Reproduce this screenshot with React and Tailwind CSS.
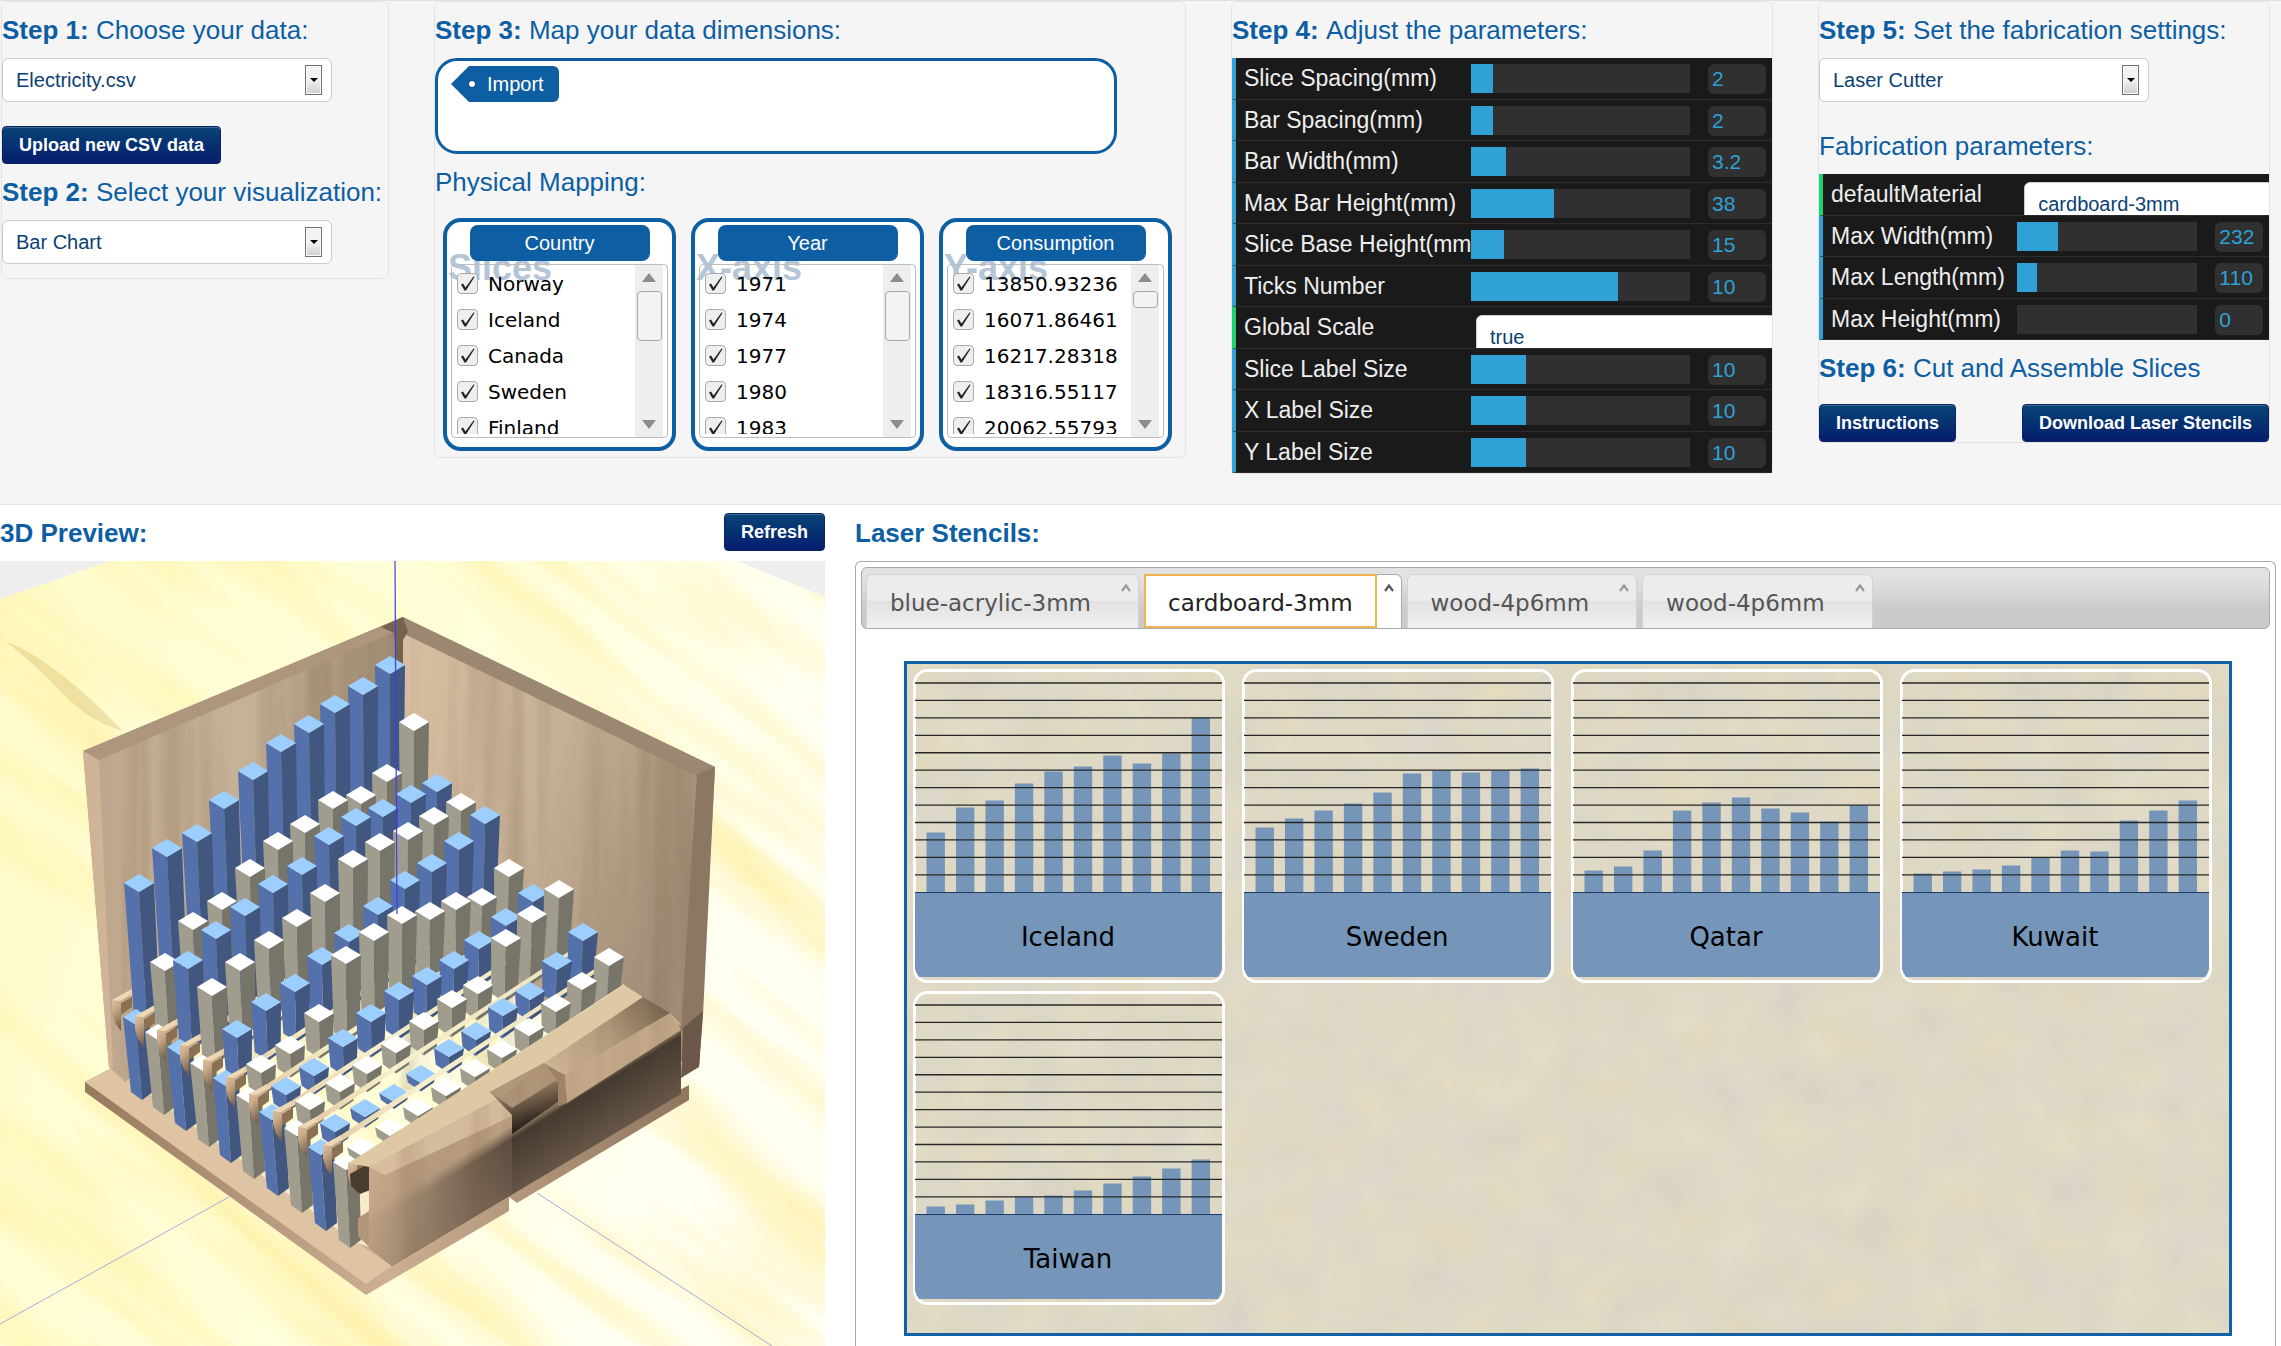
import React, { useState } from "react";

const SANS = "font-['Liberation_Sans',Arial,sans-serif]";
const WIDE = "font-['DejaVu_Sans',Verdana,sans-serif]";

/* ---------- shared controls ---------- */

function StepTitle({ step, children }) {
  return (
    <h2 className="h-14 text-[26px] leading-[56px] whitespace-nowrap text-[#0e5ea4]">
      {step && <strong className="font-bold">{step} </strong>}
      {children}
    </h2>
  );
}

function NavyButton({ children }) {
  return (
    <button
      type="button"
      className="h-[38px] rounded-[4px] border border-[#08255f] bg-linear-to-b from-[#0a4475] to-[#081b6e] px-4 text-[18px] leading-[36px] font-bold whitespace-nowrap text-white shadow-[inset_0_1px_0_#3b6a98]"
    >
      {children}
    </button>
  );
}

function SelectBox({ label, options }) {
  return (
    <div className="relative w-[330px]">
      <select
        aria-label={label}
        className="block h-11 w-full appearance-none rounded-[6px] border border-[#cccccc] bg-white px-[13px] text-[20px] text-[#0b3f73]"
      >
        {options.map((o) => (
          <option key={o}>{o}</option>
        ))}
      </select>
      <span className="pointer-events-none absolute top-[7px] right-[10px] flex h-[30px] w-[17px] items-center justify-center border border-[#707070] bg-linear-to-b from-[#f2f2f2] from-50% to-[#cfcfcf] shadow-[inset_0_0_0_1px_#fafafa]">
        <svg viewBox="0 0 8 4" className="h-1 w-2">
          <path d="M0 0h8L4 4z" fill="#000" />
        </svg>
      </span>
    </div>
  );
}

/* ---------- step 3 ---------- */

function ScrollArrow({ down }) {
  return (
    <svg viewBox="0 0 14 9" className="h-[9px] w-[14px]">
      <path d={down ? "M0 0h14L7 9z" : "M0 9h14L7 0z"} fill="#8c8c8c" />
    </svg>
  );
}

function Dimension({ name, axis, values, shortThumb }) {
  return (
    <div className="relative flex h-[233px] min-w-0 flex-1 flex-col rounded-[18px] border-4 border-[#0e5ea4] bg-white px-1 pt-[3px]">
      <span className="absolute top-[26px] left-[1px] text-[36px] leading-[40px] font-bold text-[#b5c5d8]">
        {axis}
      </span>
      <button
        type="button"
        className="relative mx-auto h-9 w-[180px] rounded-[8px] bg-[#0e5ea4] text-[20px] text-white"
      >
        {name}
      </button>
      <div className="relative mt-[3px] flex h-[174px] rounded-[4px] border border-[#bdbdbd]">
        <ul className="h-[169px] min-w-0 flex-1 overflow-hidden pl-[5px]">
          {values.map((v) => (
            <li key={v} className="h-9">
              <label className={`flex h-9 items-center gap-[10px] text-[20px] text-black ${WIDE}`}>
                <span className="relative h-[21px] w-[21px] shrink-0">
                  <input
                    type="checkbox"
                    defaultChecked
                    className="block h-[21px] w-[21px] appearance-none rounded-[4px] border border-[#aaaaaa] bg-[#eeeeee]"
                  />
                  <svg viewBox="0 0 21 21" className="pointer-events-none absolute inset-0">
                    <path d="M4 11.5L6 10.5L8.5 14.5L16.5 3.5L17.5 4L9 17.5H7.5Z" fill="#222" />
                  </svg>
                </span>
                <span className="pt-[2px]">{v}</span>
              </label>
            </li>
          ))}
        </ul>
        <div className="mr-1 flex w-7 shrink-0 flex-col items-center bg-[#eeeeee] pt-2 pb-2">
          <ScrollArrow />
          <span
            className={`mt-[9px] w-[25px] rounded-[4px] border border-[#aaaaaa] bg-[#f2f2f2] ${shortThumb ? "h-[17px]" : "h-[50px]"}`}
          />
          <span className="flex-1" />
          <ScrollArrow down />
        </div>
      </div>
    </div>
  );
}

/* ---------- parameter tables ---------- */

const ROW =
  "flex overflow-hidden border-b border-l-4 border-b-[#2c2c2c] bg-[#1a1a1a] pl-2 odd:h-[42px] even:h-[41px]";
const ROW_LABEL =
  "min-w-0 flex-[227] overflow-hidden text-[23px] leading-[40px] whitespace-nowrap text-[#eeeeee]";

function NumberRow({ label, value, percent }) {
  const [pos, setPos] = useState(percent);
  const fill = {
    background: `linear-gradient(to right, #2fa1d6 ${pos}%, #303030 ${pos}%)`,
  };
  return (
    <div className={`${ROW} border-l-[#2fa1d6]`}>
      <span className={ROW_LABEL}>{label}</span>
      <input
        type="range"
        aria-label={label}
        min="0"
        max="100"
        value={pos}
        onChange={(e) => setPos(Number(e.target.value))}
        style={fill}
        className="mt-[6px] h-[29px] min-w-0 flex-[219] appearance-none [&::-webkit-slider-thumb]:w-0 [&::-webkit-slider-thumb]:appearance-none"
      />
      <input
        type="text"
        aria-label={`${label} value`}
        defaultValue={value}
        className="mt-[6px] mr-[6px] ml-[18px] h-[30px] min-w-0 flex-[58] rounded-[6px] bg-[#303030] indent-1 text-[21px] text-[#2fa1d6]"
      />
    </div>
  );
}

function ChoiceRow({ label, options }) {
  return (
    <div className={`${ROW} border-l-[#1ed36f]`}>
      <span className={ROW_LABEL}>{label}</span>
      <div className="min-w-0 flex-[300] overflow-hidden pt-2 pl-2">
        <select
          aria-label={label}
          className="block h-11 w-[110%] appearance-none rounded-[6px] border border-[#cccccc] bg-white px-[13px] text-[20px] text-[#0b3f73]"
        >
          {options.map((o) => (
            <option key={o}>{o}</option>
          ))}
        </select>
      </div>
    </div>
  );
}

/* ---------- 3D preview ---------- */

const BLUE = { top: "#9ccfff", left: "#5471ab", right: "#42577f" };
const GREY = { top: "#ffffff", left: "#a09d8e", right: "#77746a" };

const SLICES = [
  [[390, 665], [363, 686], [335, 704], [309, 724], [281, 743], [253, 771], [224, 800], [197, 833], [167, 848], [139, 883]],
  [[414, 722], [387, 773], [361, 795], [333, 800], [305, 824], [278, 841], [250, 868], [222, 901], [193, 921], [165, 962]],
  [[437, 783], [411, 794], [383, 808], [356, 817], [329, 836], [302, 866], [273, 884], [245, 907], [216, 930], [188, 960]],
  [[461, 802], [434, 816], [408, 831], [380, 842], [353, 859], [325, 893], [297, 918], [269, 940], [240, 962], [212, 987]],
  [[485, 815], [459, 841], [432, 863], [405, 880], [378, 906], [349, 933], [322, 956], [295, 983], [266, 1002], [237, 1029]],
  [[509, 868], [482, 897], [456, 901], [430, 911], [402, 915], [374, 932], [346, 955], [319, 1013], [290, 1045], [261, 1064]],
  [[533, 893], [506, 917], [479, 940], [454, 960], [427, 976], [399, 991], [371, 1013], [343, 1038], [314, 1067], [286, 1086]],
  [[559, 889], [532, 914], [506, 938], [478, 985], [452, 999], [424, 1021], [396, 1044], [367, 1065], [340, 1083], [310, 1101]],
  [[583, 932], [557, 961], [530, 991], [503, 1007], [476, 1031], [449, 1048], [421, 1074], [394, 1093], [365, 1108], [335, 1123]],
  [[609, 957], [582, 981], [556, 1003], [529, 1027], [502, 1049], [475, 1068], [446, 1087], [418, 1107], [390, 1127], [362, 1147]],
];

const STUBS = [
  [136, 1017, 142, 1100], [158, 1032, 164, 1115], [180, 1047, 186, 1131], [203, 1063, 209, 1147], [226, 1078, 231, 1163],
  [249, 1095, 254, 1179], [272, 1112, 278, 1196], [297, 1128, 302, 1213], [321, 1147, 326, 1231], [346, 1162, 350, 1248],
];

const HOOKS = [
  [112, 1000], [135, 1016], [157, 1030], [180, 1045], [203, 1060], [226, 1077],
  [249, 1094], [273, 1111], [298, 1127], [323, 1145], [348, 1163],
];

function Prism({ x, y, bx, by, tone, hw = 15, hh = 9 }) {
  const bw = hw - 2;
  return (
    <g>
      <path d={`M${x - hw} ${y}L${x} ${y + hh}L${bx} ${by}L${bx - bw} ${by - hh}Z`} fill={tone.left} />
      <path d={`M${x + hw} ${y}L${x} ${y + hh}L${bx} ${by}L${bx + bw} ${by - hh}Z`} fill={tone.right} />
      <path d={`M${x} ${y - hh}L${x + hw} ${y}L${x} ${y + hh}L${x - hw} ${y}Z`} fill={tone.top} />
    </g>
  );
}

function Rail({ x, y }) {
  return (
    <g>
      <path d={`M${x + 12} ${y - 6}L${x + 276} ${y - 179}L${x + 277} ${y - 175}L${x + 16} ${y - 2}Z`} fill="url(#rail)" />
      <path d={`M${x + 9} ${y + 3}L${x + 20} ${y - 3}V${y + 7}L${x + 9} ${y + 15}Z`} fill="#8b7154" />
      <path
        d={`M${x} ${y}L${x + 18} ${y - 9}V${y - 2}L${x + 9} ${y + 3}V${y + 31}L${x + 3} ${y + 23}L${x} ${y + 13}Z`}
        fill="url(#hook)"
      />
      <path d={`M${x} ${y}L${x + 18} ${y - 10}V${y - 5}L${x + 8} ${y + 1}Z`} fill="#efd9b4" />
    </g>
  );
}

function Preview() {
  return (
    <svg viewBox="0 561 825 785" className="block w-full" role="img" aria-label="3D preview">
      <defs>
        <filter id="floorGrain" x="0" y="0" width="100%" height="100%" colorInterpolationFilters="sRGB">
          <feTurbulence type="fractalNoise" baseFrequency="0.0025 0.017" numOctaves="3" seed="8" />
          <feColorMatrix values="0 0 0 0 0.99  0 0 0 0 0.92  0 0 0 0 0.55  2.4 0 0 0 -1" />
        </filter>
        <filter id="woodGrain" x="0" y="0" width="100%" height="100%" colorInterpolationFilters="sRGB">
          <feTurbulence type="fractalNoise" baseFrequency="0.04 0.002" numOctaves="3" seed="5" />
          <feColorMatrix values="0 0 0 0 0.42  0 0 0 0 0.32  0 0 0 0 0.22  2 0 0 0 -0.8" />
        </filter>
        <linearGradient id="floor" x1="0" y1="0" x2="1" y2="0.3">
          <stop offset="0" stopColor="#fffbcc" />
          <stop offset="0.5" stopColor="#fffed8" />
          <stop offset="1" stopColor="#fffff4" />
        </linearGradient>
        <linearGradient id="wallL" x1="0" y1="0" x2="1" y2="0">
          <stop offset="0" stopColor="#bda58b" />
          <stop offset="0.5" stopColor="#c6b298" />
          <stop offset="1" stopColor="#9f8870" />
        </linearGradient>
        <linearGradient id="wallR" x1="0" y1="0" x2="1" y2="0.5">
          <stop offset="0" stopColor="#d8bfa3" />
          <stop offset="0.5" stopColor="#c6b096" />
          <stop offset="1" stopColor="#a38e78" />
        </linearGradient>
        <linearGradient id="rail" x1="0" y1="1" x2="1" y2="0">
          <stop offset="0" stopColor="#e5cba5" />
          <stop offset="0.3" stopColor="#f6efcb" />
          <stop offset="1" stopColor="#efe3c0" />
        </linearGradient>
        <linearGradient id="hook" x1="0" y1="0" x2="0.4" y2="1">
          <stop offset="0" stopColor="#e8cfac" />
          <stop offset="0.45" stopColor="#c9aa88" />
          <stop offset="1" stopColor="#6f5a47" />
        </linearGradient>
        <linearGradient id="plateEdge" x1="0" y1="0" x2="1" y2="0">
          <stop offset="0" stopColor="#97795d" />
          <stop offset="0.5" stopColor="#cdb093" />
          <stop offset="1" stopColor="#8f765f" />
        </linearGradient>
        <linearGradient id="front" gradientUnits="userSpaceOnUse" x1="470" y1="1080" x2="560" y2="1227">
          <stop offset="0" stopColor="#d8bd9a" />
          <stop offset="0.35" stopColor="#cdb08f" />
          <stop offset="0.42" stopColor="#443a2f" />
          <stop offset="1" stopColor="#8a7563" />
        </linearGradient>
        <linearGradient id="frontFade" gradientUnits="userSpaceOnUse" x1="369" y1="1180" x2="530" y2="1222">
          <stop offset="0" stopColor="#c7a98a" />
          <stop offset="0.3" stopColor="#b0967c" stopOpacity="0.85" />
          <stop offset="1" stopColor="#8b7460" stopOpacity="0" />
        </linearGradient>
        <linearGradient id="cap" gradientUnits="userSpaceOnUse" x1="540" y1="1080" x2="660" y2="1000">
          <stop offset="0" stopColor="#d9bf9c" />
          <stop offset="0.6" stopColor="#b0977b" />
          <stop offset="1" stopColor="#7c6752" />
        </linearGradient>
        <linearGradient id="notch" x1="0" y1="0" x2="0.3" y2="1">
          <stop offset="0" stopColor="#b89c7e" />
          <stop offset="0.45" stopColor="#9c8167" />
          <stop offset="1" stopColor="#1e1915" />
        </linearGradient>
        <clipPath id="floorClip">
          <path d="M110 561H738L825 597V1346H0V599Z" />
        </clipPath>
        <clipPath id="wallClip">
          <path d="M83 751L403 617L715 767L699 1067L369 1247L109 1067Z" />
        </clipPath>
        <clipPath id="frontClip">
          <path d="M369 1167L501 1097L544 1063L643 997L681 1020V1094L392 1266L369 1247Z" />
        </clipPath>
      </defs>

      <rect x="0" y="561" width="825" height="785" fill="#eeeeee" />
      <g clipPath="url(#floorClip)">
        <rect x="0" y="561" width="825" height="785" fill="url(#floor)" />
        <g transform="rotate(38 400 950)">
          <rect x="-250" y="250" width="1300" height="1400" filter="url(#floorGrain)" opacity="0.6" />
        </g>
        <path d="M5 641Q55 660 123 731Q90 722 62 693Q40 668 5 641Z" fill="#c9ab55" opacity="0.3" />
      </g>
      <path d="M229 1197L0 1324M537 1193L772 1346" stroke="#a9a9dd" strokeWidth="1" />

      {/* base plate */}
      <path d="M85 1082L112 1068L400 1240L689 1085V1100L517 1203L509 1197V1211L366 1295L85 1092Z" fill="url(#plateEdge)" />
      <path d="M85 1082L112 1068L359 1244L392 1266L366 1284Z" fill="#dec4a2" />
      <path d="M112 1068L130 1040L400 1200L369 1247L357 1243Z" fill="#f7ebc8" />

      {/* back walls */}
      <path d="M83 751L403 617V880L125 1082L109 1067Z" fill="url(#wallL)" />
      <path d="M403 617L715 767L699 1067L560 1020L403 900Z" fill="url(#wallR)" />
      <g clipPath="url(#wallClip)">
        <rect x="80" y="610" width="640" height="480" filter="url(#woodGrain)" opacity="0.24" />
      </g>
      <path d="M83 751L403 617L408 626L99 760Z" fill="#ad967d" />
      <path d="M83 751L99 760L113 1068L109 1067Z" fill="#cfb498" />
      <path d="M403 617L715 767L697 776L400 632Z" fill="#9c8872" />
      <path d="M715 767L697 774L681 1030L699 1067L703 1015Z" fill="#8c7762" />
      <path d="M381 627L403 617L408 632L403 640V680L397 664L394 633Z" fill="#75634f" />

      {/* slices, back to front */}
      <Rail x={HOOKS[0][0]} y={HOOKS[0][1]} />
      {SLICES.map((bars, i) => {
        const tone = i % 2 === 0 ? BLUE : GREY;
        const [hx, hy] = HOOKS[i + 1];
        const [sx, sy, ex, ey] = STUBS[i];
        return (
          <g key={i}>
            {bars.map(([x, y], j) => {
              const floorY = Math.max(hy - 0.647 * (x - hx) + 10, y + 14);
              const lean = (395 - x) * 0.00022 * (floorY - y);
              return <Prism key={j} x={x} y={y} bx={x + lean} by={floorY} tone={tone} />;
            })}
            <Prism x={sx} y={sy} bx={ex} by={ey} tone={tone} hw={13} hh={8} />
            <Rail x={hx} y={hy} />
          </g>
        );
      })}
      <path d="M350 1174L370 1163V1190L360 1194L351 1186Z" fill="#4a3b2f" />
      <path d="M358 1218L369 1211V1247L358 1236Z" fill="#b4977a" />

      {/* front panel */}
      <path d="M349 1163L624 985L643 997L501 1097L369 1167Z" fill="#dfc9a4" />
      <path d="M369 1167L501 1097L512 1110V1131L558 1102L560 1075L670 1013L681 1024V1094L392 1266L369 1247Z" fill="url(#front)" />
      <path d="M369 1167L501 1097L512 1112V1194L392 1266L369 1247Z" fill="url(#frontFade)" />
      <path d="M369 1167L501 1097L512 1116L385 1175Z" fill="#dcc3a2" opacity="0.8" />
      <path d="M544 1063L643 997L670 1013L565 1075Z" fill="url(#cap)" />
      <path d="M565 1075L670 1013L681 1030L567 1103Z" fill="#c3a98a" />
      <path d="M490 1092L544 1063L558 1082V1102L512 1134V1115Z" fill="url(#notch)" />
      <path d="M490 1092L544 1063L557 1080L512 1108Z" fill="#b0967a" />
      <path d="M544 1063L565 1075L567 1103L558 1106V1082Z" fill="#a1866b" />
      <g clipPath="url(#frontClip)">
        <rect x="360" y="990" width="330" height="280" filter="url(#woodGrain)" opacity="0.2" />
      </g>
      <path d="M683 1028L703 1011L699 1067L681 1078Z" fill="#6b5848" />

      {/* vertical axis */}
      <path d="M395 561L397 914" stroke="#3c3cf5" strokeWidth="1.2" />
    </svg>
  );
}

/* ---------- stencils ---------- */

const STENCILS = [
  ["Iceland", [60, 85, 92, 109, 121, 126, 137, 129, 139, 175]],
  ["Sweden", [65, 74, 82, 89, 100, 119, 122, 120, 122, 124]],
  ["Qatar", [22, 26, 42, 82, 90, 95, 84, 80, 71, 87]],
  ["Kuwait", [19, 21, 23, 27, 35, 42, 41, 72, 82, 92]],
  ["Taiwan", [8, 10, 14, 18, 19, 24, 31, 38, 46, 55]],
];

const GRID_LINES = Array.from({ length: 12 }, (_, k) => 14 + 17.44 * k);

function Stencil({ name, heights }) {
  return (
    <svg viewBox="0 0 312 314" className="w-[312px]" role="img" aria-label={`${name} stencil`}>
      <rect x="1.5" y="1.5" width="309" height="311" rx="13" fill="none" stroke="#fff" strokeWidth="3" />
      {heights.map((h, i) => (
        <rect key={i} x={13.5 + i * 29.46} y={223.5 - h} width="18.4" height={h} fill="#7596b9" />
      ))}
      {GRID_LINES.map((y) => (
        <path key={y} d={`M2 ${y}H309`} stroke="#262626" strokeWidth="1.3" />
      ))}
      <path d="M2 223.5H309V300Q308 304 305 308H6Q3 304 2 300Z" fill="#7596b9" />
      <path d="M2 223.5H309" stroke="#1d3a66" strokeWidth="1.2" />
      <text x="155" y="277" textAnchor="middle" fontSize="26" fill="#000" className={WIDE}>
        {name}
      </text>
    </svg>
  );
}

function Caret() {
  return (
    <svg viewBox="0 0 10 8" className="mx-auto mt-[9px] h-2 w-[10px]">
      <path d="M1 7L5 1.5L9 7" fill="none" stroke="currentColor" strokeWidth="2.2" />
    </svg>
  );
}

function Tab({ name, active }) {
  return active ? (
    <li className="flex h-[54px] rounded-t-[6px] border border-b-0 border-[#aaaaaa] bg-white text-[#222222]">
      <a href="#sheet" className="-mt-px -ml-px border-2 border-[#efb555] px-[22px] text-[23px] leading-[55px]">
        {name}
      </a>
      <span className="w-6 text-[#555555]">
        <Caret />
      </span>
    </li>
  ) : (
    <li className="flex h-[54px] rounded-t-[6px] border border-b-0 border-[#d3d3d3] bg-linear-to-b from-[#ececec] from-48% via-[#e2e2e2] via-50% to-[#f0f0f0] text-[#555555]">
      <a href="#sheet" className="px-[23px] text-[23px] leading-[57px]">
        {name}
      </a>
      <span className="w-6 text-[#999999]">
        <Caret />
      </span>
    </li>
  );
}

function Cardboard() {
  return (
    <svg className="absolute inset-0 h-full w-full" aria-hidden="true">
      <filter id="mottle" x="0" y="0" width="100%" height="100%" colorInterpolationFilters="sRGB">
        <feTurbulence type="fractalNoise" baseFrequency="0.02" numOctaves="5" seed="11" />
        <feColorMatrix values="0.05 0.02 0 0 0.837  0.04 0.03 0 0 0.812  -0.03 0.04 0.05 0 0.74  0 0 0 0 1" />
      </filter>
      <rect width="100%" height="100%" filter="url(#mottle)" />
    </svg>
  );
}

/* ---------- page ---------- */

const CARD = "min-w-0 rounded-[7px] border border-[#e4e4e4]";

export default function App() {
  return (
    <div className={`min-h-screen bg-white ${SANS}`}>
      <header className="grid min-h-[505px] grid-cols-[minmax(0,388fr)_minmax(0,752fr)_minmax(0,542fr)_minmax(0,452fr)] items-start gap-x-[45px] border-t border-b border-[#e2e2e2] bg-[#f5f5f5] pr-[11px] pl-px">
        <section className={`${CARD} pb-[14px]`}>
          <StepTitle step="Step 1:">Choose your data:</StepTitle>
          <SelectBox label="Data file" options={["Electricity.csv"]} />
          <div className="mt-6">
            <NavyButton>Upload new CSV data</NavyButton>
          </div>
          <StepTitle step="Step 2:">Select your visualization:</StepTitle>
          <SelectBox label="Visualization" options={["Bar Chart"]} />
        </section>

        <section className={`${CARD} pb-[6px]`}>
          <StepTitle step="Step 3:">Map your data dimensions:</StepTitle>
          <div className="h-24 w-10/11 rounded-[22px] border-[3px] border-[#0e5ea4] bg-white pt-[5px] pl-[13px]">
            <button type="button" className="flex h-9 items-center text-[20px] text-white">
              <svg viewBox="0 0 18 36" className="h-9 w-[18px]">
                <path d="M18 0V36L0 18Z" fill="#0e5ea4" />
              </svg>
              <span className="flex h-9 items-center rounded-r-[6px] bg-[#0e5ea4] pr-[15px]">
                <span className="mr-3 h-[6px] w-[6px] rounded-full bg-white shadow-[0_0_2px_#003]" />
                Import
              </span>
            </button>
          </div>
          <StepTitle>Physical Mapping:</StepTitle>
          <div className="mt-2 flex gap-[15px] pr-[13px] pl-2">
            <Dimension name="Country" axis="Slices" values={["Norway", "Iceland", "Canada", "Sweden", "Finland"]} />
            <Dimension name="Year" axis="X-axis" values={["1971", "1974", "1977", "1980", "1983"]} />
            <Dimension
              name="Consumption"
              axis="Y-axis"
              shortThumb
              values={["13850.93236", "16071.86461", "16217.28318", "18316.55117", "20062.55793"]}
            />
          </div>
        </section>

        <section className={CARD}>
          <StepTitle step="Step 4:">Adjust the parameters:</StepTitle>
          <div>
            <NumberRow label="Slice Spacing(mm)" value="2" percent={10} />
            <NumberRow label="Bar Spacing(mm)" value="2" percent={10} />
            <NumberRow label="Bar Width(mm)" value="3.2" percent={16} />
            <NumberRow label="Max Bar Height(mm)" value="38" percent={38} />
            <NumberRow label="Slice Base Height(mm)" value="15" percent={15} />
            <NumberRow label="Ticks Number" value="10" percent={67} />
            <ChoiceRow label="Global Scale" options={["true", "false"]} />
            <NumberRow label="Slice Label Size" value="10" percent={25} />
            <NumberRow label="X Label Size" value="10" percent={25} />
            <NumberRow label="Y Label Size" value="10" percent={25} />
          </div>
        </section>

        <section className={CARD}>
          <StepTitle step="Step 5:">Set the fabrication settings:</StepTitle>
          <SelectBox label="Fabrication machine" options={["Laser Cutter"]} />
          <div className="mt-4">
            <StepTitle>Fabrication parameters:</StepTitle>
          </div>
          <div>
            <ChoiceRow label="defaultMaterial" options={["cardboard-3mm"]} />
            <NumberRow label="Max Width(mm)" value="232" percent={23} />
            <NumberRow label="Max Length(mm)" value="110" percent={11} />
            <NumberRow label="Max Height(mm)" value="0" percent={0} />
          </div>
          <StepTitle step="Step 6:">Cut and Assemble Slices</StepTitle>
          <div className="mt-2 flex justify-between">
            <NavyButton>Instructions</NavyButton>
            <NavyButton>Download Laser Stencils</NavyButton>
          </div>
        </section>
      </header>

      <main className="grid grid-cols-[minmax(0,825fr)_minmax(0,1421fr)] items-start gap-x-[30px] pr-[5px]">
        <section>
          <div className="flex h-14 items-start justify-between">
            <h2 className="text-[26px] leading-[56px] font-bold text-[#0e5ea4]">3D Preview:</h2>
            <div className="pt-2">
              <NavyButton>Refresh</NavyButton>
            </div>
          </div>
          <Preview />
        </section>

        <section>
          <h2 className="h-14 text-[26px] leading-[56px] font-bold text-[#0e5ea4]">Laser Stencils:</h2>
          <div className="rounded-t-[6px] border border-b-0 border-[#aaaaaa] p-[5px] pb-[10px]">
            <ul
              className={`flex h-[62px] items-end gap-[5px] rounded-[6px] border border-[#aaaaaa] bg-linear-to-b from-[#e2e2e2] from-15% to-[#cbcbcb] to-70% px-[4px] ${WIDE}`}
            >
              <Tab name="blue-acrylic-3mm" />
              <Tab name="cardboard-3mm" active />
              <Tab name="wood-4p6mm" />
              <Tab name="wood-4p6mm" />
            </ul>
            <div
              id="sheet"
              className="relative mt-8 mr-[38px] ml-[43px] min-h-[675px] border-[3px] border-[#1260a5] bg-[#dfd9c5]"
            >
              <Cardboard />
              <div className="relative flex flex-wrap gap-x-[17px] gap-y-2 pt-[5px] pl-[6px]">
                {STENCILS.map(([name, heights]) => (
                  <Stencil key={name} name={name} heights={heights} />
                ))}
              </div>
            </div>
          </div>
        </section>
      </main>
    </div>
  );
}
